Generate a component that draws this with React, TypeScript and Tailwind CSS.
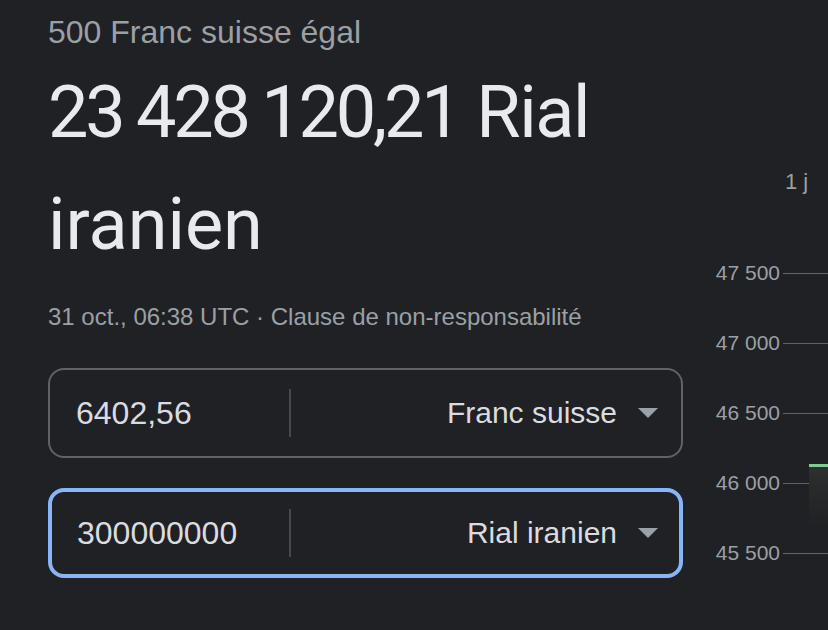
import React from 'react';

const sans = { fontFamily: '"Liberation Sans", Arial, sans-serif' };

function Caret() {
  return (
    <svg width="20" height="10" viewBox="0 0 20 10" className="ml-[21px] shrink-0">
      <path d="M0 0h20L10 10z" fill="#9aa0a6" />
    </svg>
  );
}

function CurrencyField({
  value,
  currency,
  active,
}: {
  value: string;
  currency: string;
  active?: boolean;
}) {
  return (
    <div
      className={
        active
          ? 'flex items-center h-[90px] rounded-[16px] border-4 border-[#8ab4f8]'
          : 'flex items-center h-[90px] rounded-[16px] border-2 border-[#5f6368]'
      }
    >
      <div
        className={
          active
            ? 'w-[237px] pl-[25px] text-[32px] leading-[40px] text-[#dadce0]'
            : 'w-[239px] pl-[26px] text-[32px] leading-[40px] text-[#dadce0]'
        }
      >
        {value}
      </div>
      <div className="w-[2px] h-12 bg-[#45484c]" />
      <div
        className={
          active
            ? 'flex-1 flex items-center justify-end pr-[21px] text-[30px] leading-[40px] text-[#dadce0]'
            : 'flex-1 flex items-center justify-end pr-[23px] text-[30px] leading-[40px] text-[#dadce0]'
        }
      >
        <span>{currency}</span>
        <Caret />
      </div>
    </div>
  );
}

export default function App() {
  const ticks = ['47 500', '47 000', '46 500', '46 000', '45 500'];

  return (
    <div className="w-[828px] h-[630px] bg-[#202124] flex overflow-hidden" style={sans}>
      {/* Converter */}
      <div className="w-[683px] shrink-0 pl-12 pt-[12px]">
        <div className="text-[32px] leading-[40px] text-[#9aa0a6]">500 Franc suisse égal</div>
        <div
          className="mt-[5px] text-[72px] leading-[112px] text-[#e8eaed]"
          style={{ fontFamily: 'Roboto, "Open Sans", sans-serif' }}
        >
          <span className="tracking-[-0.045em] [word-spacing:-1px]">23 428 120,21</span>{' '}
          <span className="tracking-[-0.02em]">Rial</span> iranien
        </div>
        <div className="mt-[20px] text-[24px] leading-[32px] text-[#9aa0a6]">
          31 oct., 06:38 UTC · Clause de non-responsabilité
        </div>
        <div className="mt-[35px]">
          <CurrencyField value="6402,56" currency="Franc suisse" />
        </div>
        <div className="mt-[30px]">
          <CurrencyField value="300000000" currency="Rial iranien" active />
        </div>
      </div>

      {/* Chart */}
      <div className="flex-1 relative pt-[168px]">
        <div className="pl-[102px] text-[22px] leading-[28px] text-[#9aa0a6]">1 j</div>
        <div className="mt-[42px]">
          {ticks.map((t) => (
            <div key={t} className="h-[70px] flex items-center">
              <div className="w-[97px] text-right text-[21px] leading-[24px] text-[#9aa0a6]">{t}</div>
              <div className="flex-1 ml-[3px] h-px bg-[#5f6368]" />
            </div>
          ))}
        </div>
        <div className="absolute left-[126px] right-0 top-[464px] h-[62px] border-t-[3px] border-[#81c995] bg-gradient-to-b from-[#2c302e] to-[#202124]" />
      </div>
    </div>
  );
}
